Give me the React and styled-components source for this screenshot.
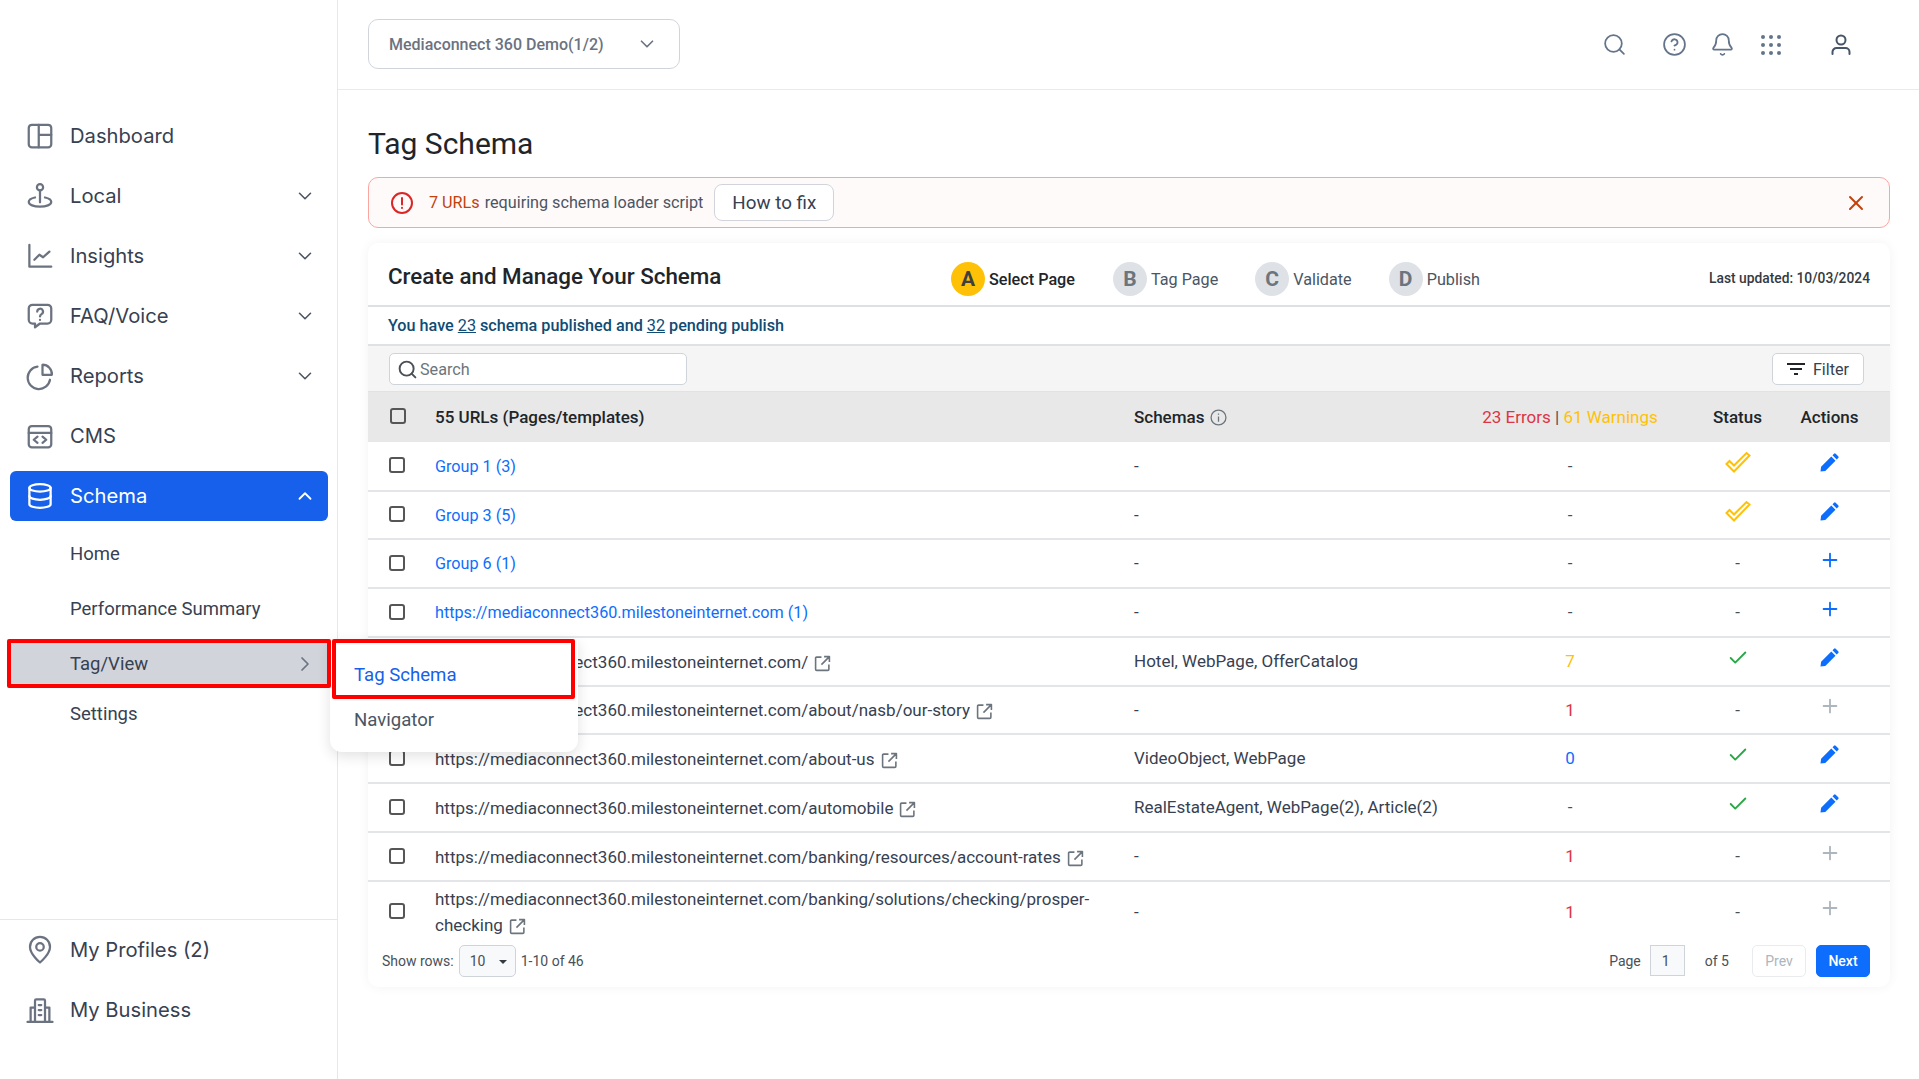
import styled, { createGlobalStyle } from 'styled-components';
import { ChevronDown, ChevronUp, ChevronRight, Search, CircleHelp, Bell, X, Check, Plus } from 'lucide-react';

const GlobalStyle = createGlobalStyle`
  html, body {
    margin: 0;
    padding: 0;
    background: #fff;
    font-family: Roboto, "Liberation Sans", sans-serif;
  }
  * {
    box-sizing: border-box;
  }
`;

const Page = styled.div`
  display: flex;
  width: 1919px;
  height: 1079px;
  overflow: hidden;
`;

const Sidebar = styled.aside`
  width: 338px;
  flex: none;
  display: flex;
  flex-direction: column;
  border-right: 1px solid #e5e7eb;
  padding-top: 111px;
`;

const NavList = styled.nav`
  flex: 1;
  display: flex;
  flex-direction: column;
  position: relative;
`;

const NavItem = styled.div`
  height: 50px;
  margin: 0 9px 10px 10px;
  padding: 0 12px 0 15px;
  display: flex;
  align-items: center;
  border-radius: 6px;
  font-family: Inter, sans-serif;
  font-size: 20.2px;
  color: ${(p) => (p.$active ? '#fff' : '#374151')};
  background: ${(p) => (p.$active ? '#1660eb' : 'transparent')};

  & > svg:first-child {
    width: 30px;
    height: 30px;
    margin-right: 15px;
    flex: none;
    color: ${(p) => (p.$active ? '#fff' : '#6b7280')};
  }
`;

const NavLabel = styled.span`
  flex: 1;
  margin-top: -2px;
`;

const NavChevron = styled.span`
  display: flex;
  color: ${(p) => (p.$active ? '#fff' : '#4b5563')};
`;

const SubList = styled.div`
  display: flex;
  flex-direction: column;
  margin-top: -5px;
`;

const SubItem = styled.div`
  height: ${(p) => p.$h || 55}px;
  margin: ${(p) => p.$mt || 0}px 8px 0 9px;
  padding: 0 12px 0 61px;
  display: flex;
  align-items: center;
  justify-content: space-between;
  font-size: 18.5px;
  color: #374151;
  background: ${(p) => (p.$selected ? '#d1d5db' : 'transparent')};
`;

const RedFrame = styled.div`
  position: absolute;
  border: 4px solid #f00;
  border-radius: 2px;
  pointer-events: none;
  z-index: 6;
  left: ${(p) => p.$x}px;
  top: ${(p) => p.$y}px;
  width: ${(p) => p.$w}px;
  height: ${(p) => p.$h}px;
`;

const Flyout = styled.div`
  position: absolute;
  left: 330px;
  top: 529px;
  width: 248px;
  height: 112px;
  background: #fff;
  border-radius: 0 0 12px 12px;
  box-shadow: 0 4px 14px rgba(0, 0, 0, 0.12);
  z-index: 5;
  display: flex;
  flex-direction: column;
  padding: 25px 24px 0;
  font-size: 18.6px;
  gap: 24px;
`;

const FlyoutLink = styled.div`
  line-height: 21px;
  color: ${(p) => (p.$active ? '#1660eb' : '#4b5563')};
`;

const BottomNav = styled.div`
  border-top: 1px solid #e5e7eb;
  padding-top: 5px;
  height: 160px;
  flex: none;
`;

const Main = styled.main`
  flex: 1;
  min-width: 0;
  display: flex;
  flex-direction: column;
`;

const TopBar = styled.header`
  height: 90px;
  flex: none;
  display: flex;
  align-items: center;
  padding: 0 67px 0 30px;
  border-bottom: 1px solid #e9eaec;
`;

const ProfileSelect = styled.div`
  width: 312px;
  height: 50px;
  margin-top: -1px;
  padding: 0 21px 0 20px;
  display: flex;
  align-items: center;
  justify-content: space-between;
  border: 1px solid #d1d5db;
  border-radius: 10px;
  font-size: 16px;
  font-weight: 500;
  color: #6b7280;
`;

const TopIcons = styled.div`
  margin-left: auto;
  display: flex;
  align-items: center;
  color: #64748b;
`;

const TopIcon = styled.span`
  display: flex;
  margin-left: ${(p) => p.$gap}px;
  color: ${(p) => p.$color || 'inherit'};
`;

const Content = styled.div`
  padding: 0 29px 0 30px;
`;

const Title = styled.h1`
  margin: 35px 0 15px;
  font-size: 30px;
  font-weight: 400;
  line-height: 37px;
  color: #212529;
`;

const Alert = styled.div`
  height: 51px;
  display: flex;
  align-items: center;
  padding: 0 21px 0 21px;
  background: #fffafa;
  border: 1px solid #fca5a0;
  border-radius: 10px;
  font-size: 16.2px;
  color: #4b5563;
`;

const AlertCount = styled.span`
  margin: 0 5px 0 15px;
  color: #c2410c;
`;

const HowToFix = styled.button`
  height: 37px;
  width: 120px;
  margin-left: 11px;
  background: #fff;
  border: 1px solid #d1d5db;
  border-radius: 8px;
  font-family: inherit;
  font-size: 18.8px;
  color: #374151;
`;

const CloseBtn = styled.span`
  margin-left: auto;
  display: flex;
  color: #c2410c;
`;

const Card = styled.section`
  margin-top: 15px;
  height: 744px;
  background: #fff;
  border-radius: 10px;
  box-shadow: 0 0 12px rgba(0, 0, 0, 0.05);
  display: flex;
  flex-direction: column;
`;

const CardHead = styled.div`
  height: 64px;
  flex: none;
  display: flex;
  align-items: center;
  padding: 0 20px 0 20px;
  border-bottom: 2px solid #dee0e3;
`;

const CardTitle = styled.h2`
  margin: 4px 0 0;
  width: 563px;
  font-size: 22.4px;
  font-weight: 500;
  color: #212529;
`;

const Steps = styled.div`
  display: flex;
  align-items: center;
  margin-top: 10px;
`;

const Step = styled.div`
  display: flex;
  align-items: center;
  gap: 4px;
  margin-right: ${(p) => p.$mr}px;
  font-size: 16.2px;
  color: ${(p) => (p.$on ? '#212529' : '#4b5563')};
  font-weight: ${(p) => (p.$on ? 500 : 400)};
`;

const StepBadge = styled.span`
  width: 34px;
  height: 34px;
  border-radius: 50%;
  display: flex;
  align-items: center;
  justify-content: center;
  font-size: 21px;
  font-weight: 700;
  background: ${(p) => (p.$on ? '#ffc107' : '#dee2e6')};
  color: ${(p) => (p.$on ? '#3f3f3f' : '#6c757d')};
`;

const Updated = styled.div`
  margin-left: auto;
  margin-top: 8px;
  font-size: 13.8px;
  font-weight: 500;
  color: #343a40;
`;

const Summary = styled.div`
  height: 39px;
  flex: none;
  display: flex;
  align-items: center;
  padding-left: 20px;
  font-size: 16.2px;
  font-weight: 500;
  color: #0f4c75;
  white-space: pre;
  border-bottom: 2px solid #dfe1e3;

  u {
    font-weight: 400;
  }
`;

const SearchRow = styled.div`
  height: 46px;
  flex: none;
  display: flex;
  align-items: center;
  justify-content: space-between;
  padding: 0 26px 0 21px;
  background: #f5f5f5;
  border-bottom: 1px solid #e2e2e2;
`;

const SearchBox = styled.div`
  width: 298px;
  height: 32px;
  display: flex;
  align-items: center;
  gap: 2px;
  padding: 1px 0 0 7px;
  background: #fff;
  border: 1px solid #ced4da;
  border-radius: 5px;
  font-size: 16.2px;
  color: #6c757d;
`;

const FilterBtn = styled.div`
  width: 92px;
  height: 32px;
  display: flex;
  align-items: center;
  justify-content: center;
  gap: 8px;
  padding-top: 1px;
  background: #fff;
  border: 1px solid #ced4da;
  border-radius: 5px;
  font-size: 16.2px;
  color: #374151;
`;

const Row = styled.div`
  display: grid;
  grid-template-columns: 67px 699px 301px 270px 65px 119px;
  align-items: center;
  height: ${(p) => p.$h}px;
  flex: none;
  font-size: 17px;
  color: #374151;
  background: ${(p) => (p.$head ? '#e8e8e8' : 'transparent')};
  border-bottom: ${(p) => (p.$head || p.$last ? '0' : '2px solid #e4e5e8')};
  font-weight: ${(p) => (p.$head ? 500 : 400)};
`;

const Box = styled.span`
  width: 16px;
  height: 16px;
  margin: ${(p) => (p.$head ? '-2px 0 0 22px' : '-2px 0 0 21px')};
  border: 2px solid #565656;
  border-radius: 3px;
  display: block;
`;

const UrlCell = styled.div`
  line-height: 26px;
  padding: ${(p) => (p.$link ? '1px' : '0')} 40px 0 0;
  margin-top: ${(p) => (p.$head ? '-1px' : '0')};
  font-size: ${(p) => (p.$link ? '16.2px' : 'inherit')};
  color: ${(p) => (p.$link ? '#0d6efd' : p.$head ? '#212529' : '#374151')};

  svg {
    vertical-align: -4px;
    margin-left: 6px;
  }
`;

const SchemaCell = styled.div`
  white-space: nowrap;
  margin-top: -1px;
`;

const Center = styled.div`
  text-align: center;
  display: flex;
  justify-content: center;
  align-items: center;
  padding-bottom: 1px;
  color: ${(p) => p.$color || '#495057'};
  ${(p) => p.$up && 'margin-top: -7px;'}
`;

const HeadText = styled.div`
  display: flex;
  align-items: center;
  gap: 6px;
  justify-content: ${(p) => (p.$center ? 'center' : 'flex-start')};
  color: #212529;
`;

const Err = styled.span`
  color: #dc3545;
  font-weight: 400;
`;

const Warn = styled.span`
  color: #ffc107;
  font-weight: 400;
`;

const Pipe = styled.span`
  color: #495057;
  font-weight: 400;
  white-space: pre;
`;

const Footer = styled.div`
  flex: 1;
  display: flex;
  align-items: center;
  padding: 0 20px 8px 14px;
  font-size: 14px;
  color: #495057;
`;

const RowsSelect = styled.div`
  width: 57px;
  height: 32px;
  margin: 0 5px 0 5px;
  padding: 0 0 0 10px;
  display: flex;
  align-items: center;
  gap: 14px;
  background: #f8f9fa;
  border: 1px solid #ced4da;
  border-radius: 5px;
`;

const Caret = styled.span`
  width: 0;
  height: 0;
  border-left: 4px solid transparent;
  border-right: 4px solid transparent;
  border-top: 4px solid #343a40;
  margin-top: 2px;
`;

const Pager = styled.div`
  margin-left: auto;
  display: flex;
  align-items: center;
`;

const PageInput = styled.span`
  width: 35px;
  height: 31px;
  margin: 0 20px 0 9px;
  padding-left: 11px;
  display: flex;
  align-items: center;
  background: #f8f9fa;
  border: 1px solid #ced4da;
`;

const PagerBtn = styled.span`
  width: 54px;
  height: 32px;
  margin-left: ${(p) => p.$ml}px;
  display: flex;
  align-items: center;
  justify-content: center;
  border-radius: 5px;
  font-weight: ${(p) => (p.$primary ? 500 : 400)};
  background: ${(p) => (p.$primary ? '#0d6efd' : '#fff')};
  color: ${(p) => (p.$primary ? '#fff' : '#adb5bd')};
  border: 1px solid ${(p) => (p.$primary ? '#0d6efd' : '#e9ecef')};
`;

const Ic = ({ children, size = 24 }) => (
  <svg width={size} height={size} viewBox="0 0 24 24" fill="none" stroke="currentColor" strokeWidth="1.8" strokeLinecap="round" strokeLinejoin="round">
    {children}
  </svg>
);

const DashboardIcon = () => (
  <Ic>
    <rect x="3" y="3" width="18" height="18" rx="2.5" />
    <path d="M11 3v18M11 11h10" />
  </Ic>
);
const LocalIcon = () => (
  <Ic>
    <circle cx="12" cy="5" r="2.5" />
    <path d="M12 7.5V17M8 13.2c-3 .6-5 1.9-5 3.6C3 19 7 20.5 12 20.5s9-1.500 9-3.700c0-1.700-2-3-5-3.600" />
  </Ic>
);
const InsightsIcon = () => (
  <Ic>
    <path d="M3.500 3v17.500H21" />
    <path d="M7.500 15l4-4 3 2 5-4.500" />
  </Ic>
);
const FaqIcon = () => (
  <Ic>
    <path d="M6 3h12a3 3 0 0 1 3 3v9a3 3 0 0 1-3 3h-6l-4 3v-3H6a3 3 0 0 1-3-3V6a3 3 0 0 1 3-3z" />
    <path d="M9.800 8.500a2.300 2.300 0 1 1 3.400 2c-.8.500-1.200 1-1.200 1.800M12 15v.1" />
  </Ic>
);
const ReportsIcon = () => (
  <Ic>
    <path d="M10 4.500A9 9 0 1 0 20 15" />
    <path d="M14 3a7.500 7.500 0 0 1 7.500 8H14z" />
  </Ic>
);
const CmsIcon = () => (
  <Ic>
    <rect x="3" y="4" width="18" height="17" rx="2.500" />
    <path d="M3 9.500h18M10 12.500l-3 2.500 3 2.500M14 12.500l3 2.500-3 2.500" />
  </Ic>
);
const DbIcon = () => (
  <Ic>
    <ellipse cx="12" cy="5.500" rx="8.500" ry="3" />
    <path d="M3.500 5.500v13c0 1.700 3.800 3 8.500 3s8.500-1.300 8.500-3v-13" />
    <path d="M3.500 12c0 1.700 3.800 3 8.500 3s8.500-1.300 8.500-3" />
  </Ic>
);
const PinIcon = () => (
  <Ic>
    <path d="M12 22s-8-6.700-8-12.500a8 8 0 0 1 16 0C20 15.300 12 22 12 22z" />
    <circle cx="12" cy="9.500" r="3" />
  </Ic>
);
const BusinessIcon = () => (
  <Ic>
    <path d="M2 21.500h20M8 21V4.500a1 1 0 0 1 1-1h6a1 1 0 0 1 1 1V21M8 10H4.500v11M16 10h3.500v11" />
    <path d="M11 8h2M11 12h2M11 16h2" />
  </Ic>
);

const GridIcon = () => (
  <svg width="20" height="20" viewBox="0 0 20 20" fill="currentColor">
    {[2, 10, 18].flatMap((y) =>
      [2, 10, 18].map((x) => <circle key={`${x}-${y}`} cx={x} cy={y} r="2" />)
    )}
  </svg>
);
const UserIcon = () => (
  <svg width="22" height="24" viewBox="0 0 22 24" fill="none" stroke="#475569" strokeWidth="2" strokeLinecap="round">
    <circle cx="11" cy="7" r="4.500" />
    <path d="M2.500 21v-2a4 4 0 0 1 4-4h9a4 4 0 0 1 4 4v2" />
  </svg>
);
const AlertIcon = () => (
  <svg width="24" height="24" viewBox="0 0 24 24" fill="none" stroke="#dc2626" strokeWidth="2" strokeLinecap="round">
    <circle cx="12" cy="12" r="10" />
    <path d="M12 7v6.500M12 16.800v.2" />
  </svg>
);
const FilterIcon = () => (
  <svg width="18" height="14" viewBox="0 0 18 14" fill="#212529">
    <rect x="0" y="1" width="18" height="2" />
    <rect x="3" y="6" width="12" height="2" />
    <rect x="7" y="11" width="4" height="2" />
  </svg>
);
const InfoIcon = () => (
  <svg width="17" height="17" viewBox="0 0 16 16" fill="none" stroke="#6c757d" strokeWidth="1.2">
    <circle cx="8" cy="8" r="7" />
    <path d="M8 7v5M8 4.200v1.100" />
  </svg>
);
const ExternalIcon = () => (
  <svg width="17" height="17" viewBox="0 0 16 16" fill="none" stroke="#6c757d" strokeWidth="1.500" strokeLinejoin="round">
    <path d="M7 2H2.500a1 1 0 0 0-1 1v10.500a1 1 0 0 0 1 1H13a1 1 0 0 0 1-1V9M9.500 1.500H14.500V6.500M14 2L7 9" />
  </svg>
);
const PenIcon = () => (
  <svg width="19" height="19" viewBox="0 0 19 19" fill="#0d6efd">
    <path d="M0.500 18.500l0.600-4.800L11.300 3.500l4.200 4.200L5.300 17.900zM12.500 2.300l1.500-1.500a1.200 1.200 0 0 1 1.700 0l2.500 2.500a1.200 1.200 0 0 1 0 1.700l-1.500 1.500z" />
  </svg>
);
const DoubleCheck = () => (
  <svg width="26" height="22" viewBox="0 0 26 22" fill="none" stroke="#ffc107" strokeWidth="2" strokeLinejoin="miter">
    <path d="M1.500 13l3-3 4.500 4.500L21.500 2l3 2.500L9 20.500z" />
  </svg>
);

const rows = [
  { url: 'Group 1 (3)', link: true, schema: '-', count: '-', status: 'warn', action: 'edit', h: 50 },
  { url: 'Group 3 (5)', link: true, schema: '-', count: '-', status: 'warn', action: 'edit', h: 48 },
  { url: 'Group 6 (1)', link: true, schema: '-', count: '-', status: '-', action: 'add', h: 49 },
  { url: 'https://mediaconnect360.milestoneinternet.com (1)', link: true, schema: '-', count: '-', status: '-', action: 'add', h: 49 },
  { url: 'https://mediaconnect360.milestoneinternet.com/', ext: true, schema: 'Hotel, WebPage, OfferCatalog', count: '7', color: '#ffc107', status: 'ok', action: 'edit', h: 49 },
  { url: 'https://mediaconnect360.milestoneinternet.com/about/nasb/our-story', ext: true, schema: '-', count: '1', color: '#dc3545', status: '-', action: 'mute', h: 48 },
  { url: 'https://mediaconnect360.milestoneinternet.com/about-us', ext: true, schema: 'VideoObject, WebPage', count: '0', color: '#0d6efd', status: 'ok', action: 'edit', h: 49 },
  { url: 'https://mediaconnect360.milestoneinternet.com/automobile', ext: true, schema: 'RealEstateAgent, WebPage(2), Article(2)', count: '-', status: 'ok', action: 'edit', h: 49 },
  { url: 'https://mediaconnect360.milestoneinternet.com/banking/resources/account-rates', ext: true, schema: '-', count: '1', color: '#dc3545', status: '-', action: 'mute', h: 49 },
  { url: 'https://mediaconnect360.milestoneinternet.com/banking/solutions/checking/prosper-checking', ext: true, schema: '-', count: '1', color: '#dc3545', status: '-', action: 'mute', h: 60, last: true },
];

const StatusMark = ({ value }) => {
  if (value === 'warn') return <Center $up><DoubleCheck /></Center>;
  if (value === 'ok') return <Center $up $color="#28a745"><Check size={22} strokeWidth={2} /></Center>;
  return <Center>-</Center>;
};

const ActionMark = ({ value }) => {
  if (value === 'edit') return <Center $up><PenIcon /></Center>;
  if (value === 'add') return <Center $up $color="#0d6efd"><Plus size={22} strokeWidth={2} /></Center>;
  return <Center $up $color="#adb5bd"><Plus size={22} strokeWidth={2} /></Center>;
};

const mainNav = [
  { label: 'Dashboard', icon: <DashboardIcon /> },
  { label: 'Local', icon: <LocalIcon />, more: true },
  { label: 'Insights', icon: <InsightsIcon />, more: true },
  { label: 'FAQ/Voice', icon: <FaqIcon />, more: true },
  { label: 'Reports', icon: <ReportsIcon />, more: true },
  { label: 'CMS', icon: <CmsIcon /> },
];

const App = () => (
  <>
    <GlobalStyle />
    <Page>
      <Sidebar>
        <NavList>
          {mainNav.map((item) => (
            <NavItem key={item.label}>
              {item.icon}
              <NavLabel>{item.label}</NavLabel>
              {item.more && <NavChevron><ChevronDown size={22} strokeWidth={1.7} /></NavChevron>}
            </NavItem>
          ))}
          <NavItem $active>
            <DbIcon />
            <NavLabel>Schema</NavLabel>
            <NavChevron $active><ChevronUp size={22} strokeWidth={2} /></NavChevron>
          </NavItem>
          <SubList>
            <SubItem>Home</SubItem>
            <SubItem>Performance Summary</SubItem>
            <SubItem $selected $h={44} $mt={6}>
              Tag/View
              <ChevronRight size={24} strokeWidth={1.7} color="#6b7280" />
            </SubItem>
            <SubItem>Settings</SubItem>
          </SubList>
          <RedFrame $x={7} $y={528} $w={324} $h={49} />
          <RedFrame $x={332} $y={528} $w={243} $h={60} />
          <Flyout>
            <FlyoutLink $active>Tag Schema</FlyoutLink>
            <FlyoutLink>Navigator</FlyoutLink>
          </Flyout>
        </NavList>
        <BottomNav>
          <NavItem><PinIcon /><NavLabel>My Profiles (2)</NavLabel></NavItem>
          <NavItem><BusinessIcon /><NavLabel>My Business</NavLabel></NavItem>
        </BottomNav>
      </Sidebar>
      <Main>
        <TopBar>
          <ProfileSelect>
            Mediaconnect 360 Demo(1/2)
            <ChevronDown size={22} strokeWidth={1.8} />
          </ProfileSelect>
          <TopIcons>
            <TopIcon><Search size={25} strokeWidth={1.7} /></TopIcon>
            <TopIcon $gap={35}><CircleHelp size={25} strokeWidth={1.7} /></TopIcon>
            <TopIcon $gap={23}><Bell size={25} strokeWidth={1.7} /></TopIcon>
            <TopIcon $gap={26}><GridIcon /></TopIcon>
            <TopIcon $gap={49}><UserIcon /></TopIcon>
          </TopIcons>
        </TopBar>
        <Content>
          <Title>Tag Schema</Title>
          <Alert>
            <AlertIcon />
            <AlertCount>7 URLs</AlertCount>
            requiring schema loader script
            <HowToFix>How to fix</HowToFix>
            <CloseBtn><X size={24} strokeWidth={2} /></CloseBtn>
          </Alert>
          <Card>
            <CardHead>
              <CardTitle>Create and Manage Your Schema</CardTitle>
              <Steps>
                <Step $on $mr={38}><StepBadge $on>A</StepBadge>Select Page</Step>
                <Step $mr={37}><StepBadge>B</StepBadge>Tag Page</Step>
                <Step $mr={37}><StepBadge>C</StepBadge>Validate</Step>
                <Step><StepBadge>D</StepBadge>Publish</Step>
              </Steps>
              <Updated>Last updated: 10/03/2024</Updated>
            </CardHead>
            <Summary>You have <u>23</u> schema published and <u>32</u> pending publish</Summary>
            <SearchRow>
              <SearchBox><Search size={21} strokeWidth={2.2} color="#495057" />Search</SearchBox>
              <FilterBtn><FilterIcon />Filter</FilterBtn>
            </SearchRow>
            <Row $head $h={50}>
              <Box $head />
              <UrlCell $head>55 URLs (Pages/templates)</UrlCell>
              <HeadText>Schemas <InfoIcon /></HeadText>
              <Center>
                <Err>23 Errors</Err><Pipe> | </Pipe><Warn>61 Warnings</Warn>
              </Center>
              <HeadText $center>Status</HeadText>
              <HeadText $center>Actions</HeadText>
            </Row>
            {rows.map((r) => (
              <Row key={r.url} $h={r.h} $last={r.last}>
                <Box />
                <UrlCell $link={r.link}>
                  {r.url}
                  {r.ext && <ExternalIcon />}
                </UrlCell>
                <SchemaCell>{r.schema}</SchemaCell>
                <Center $color={r.color}>{r.count}</Center>
                <StatusMark value={r.status} />
                <ActionMark value={r.action} />
              </Row>
            ))}
            <Footer>
              Show rows:
              <RowsSelect>10 <Caret /></RowsSelect>
              1-10 of 46
              <Pager>
                Page
                <PageInput>1</PageInput>
                of 5
                <PagerBtn $ml={23}>Prev</PagerBtn>
                <PagerBtn $ml={10} $primary>Next</PagerBtn>
              </Pager>
            </Footer>
          </Card>
        </Content>
      </Main>
    </Page>
  </>
);

export default App;
